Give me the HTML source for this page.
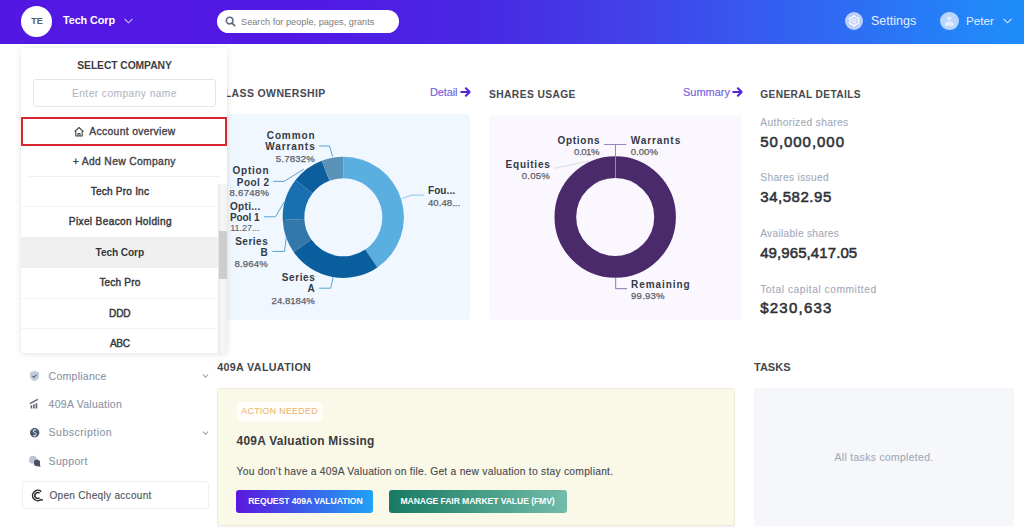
<!DOCTYPE html>
<html><head><meta charset="utf-8"><style>
html,body{margin:0;padding:0;width:1024px;height:528px;overflow:hidden;background:#fff;font-family:"Liberation Sans",sans-serif;position:relative}
.t{position:absolute;line-height:1;white-space:nowrap}
.circ{position:absolute;border-radius:50%}
#hdr{position:absolute;left:0;top:0;width:1024px;height:43.5px;background:linear-gradient(90deg,#5317e2 0%,#5219e4 30%,#4828e4 47%,#4143e8 62.5%,#3263f1 78%,#2287f9 96%,#1f8cfb 100%)}
#dd{position:absolute;left:21.2px;top:47.5px;width:205.5px;height:305.2px;background:#fff;border-radius:3px;box-shadow:0 1px 6px rgba(0,0,0,0.12)}
</style></head><body>
<div id="hdr"></div><div class="circ" style="left:21px;top:6px;width:31px;height:31px;background:#fff"></div><div class="t" style="left:31.20px;top:16.98px;font-size:9.0px;color:#555a60;letter-spacing:0.000px;font-weight:700;">TE</div>
<div class="t" style="left:63.00px;top:15.16px;font-size:10.8px;color:#fff;letter-spacing:-0.076px;font-weight:700;">Tech Corp</div>
<svg style="position:absolute;left:123px;top:17px" width="11" height="8"><path d="M1.5,1.8 L5.5,5.8 L9.5,1.8" fill="none" stroke="#c9c0f5" stroke-width="1.1"/></svg><div style="position:absolute;left:217px;top:10px;width:182px;height:23px;border-radius:12px;background:#fff"></div><svg style="position:absolute;left:225px;top:16px" width="11" height="11"><circle cx="4.6" cy="4.6" r="3.3" fill="none" stroke="#5f6b7e" stroke-width="1.6"/><path d="M7.1,7.1 L9.6,9.6" stroke="#5f6b7e" stroke-width="1.8" stroke-linecap="round"/></svg><div class="t" style="top:18.21px;font-size:9.2px;color:#7d7d7d;left:241px;">Search for people, pages, grants</div>
<div class="circ" style="left:845px;top:11.9px;width:18.3px;height:18.3px;background:rgba(255,255,255,0.68)"></div><svg style="position:absolute;left:0;top:0" width="1024" height="44"><polygon points="854.20,15.60 856.15,17.52 858.79,18.25 858.10,20.90 858.79,23.55 856.15,24.28 854.20,26.20 852.25,24.28 849.61,23.55 850.30,20.90 849.61,18.25 852.25,17.52" fill="none" stroke="rgba(255,255,255,0.85)" stroke-width="1.3" stroke-linejoin="round"/><circle cx="854.2" cy="20.9" r="1.7" fill="none" stroke="rgba(255,255,255,0.85)" stroke-width="1.1"/></svg><div class="t" style="top:14.72px;font-size:12.5px;color:#e6eeff;left:871px;">Settings</div>
<div class="circ" style="left:940.2px;top:12.1px;width:18.4px;height:18.4px;background:rgba(255,255,255,0.68)"></div><svg style="position:absolute;left:0;top:0" width="1024" height="44"><circle cx="949.3" cy="18.3" r="2.1" fill="rgba(255,255,255,0.55)"/><path d="M944.7,25.8 Q944.7,21.6 949.4,21.6 Q954.1,21.6 954.1,25.8 Z" fill="rgba(255,255,255,0.6)"/></svg><div class="t" style="top:15.40px;font-size:11.7px;color:#e6eeff;left:966px;">Peter</div>
<svg style="position:absolute;left:1002px;top:17px" width="11" height="8"><path d="M1.5,1.8 L5.5,5.8 L9.5,1.8" fill="none" stroke="#d6e6ff" stroke-width="1.1"/></svg><div class="t" style="left:216.80px;top:89.32px;font-size:10.49px;color:#46494f;letter-spacing:0.389px;font-weight:700;">CLASS OWNERSHIP</div>
<div class="t" style="left:430.00px;top:86.99px;font-size:11.0px;color:#7a5fe0;letter-spacing:-0.145px;-webkit-text-stroke:0.15px #7a5fe0;">Detail</div>
<svg style="position:absolute;left:460.2px;top:86.5px" width="12" height="11"><path d="M1.3,5 H9.6 M5.9,1.3 L9.6,5 L5.9,8.7" fill="none" stroke="#5224e0" stroke-width="2.1" stroke-linecap="round" stroke-linejoin="round"/></svg><div class="t" style="left:489.00px;top:89.61px;font-size:10.27px;color:#46494f;letter-spacing:0.393px;font-weight:700;">SHARES USAGE</div>
<div class="t" style="left:683.00px;top:86.99px;font-size:11.0px;color:#7a5fe0;letter-spacing:-0.010px;-webkit-text-stroke:0.15px #7a5fe0;">Summary</div>
<svg style="position:absolute;left:731.5px;top:86.5px" width="12" height="11"><path d="M1.3,5 H9.6 M5.9,1.3 L9.6,5 L5.9,8.7" fill="none" stroke="#5224e0" stroke-width="2.1" stroke-linecap="round" stroke-linejoin="round"/></svg><div class="t" style="left:760.30px;top:89.67px;font-size:10.2px;color:#46494f;letter-spacing:0.357px;font-weight:700;">GENERAL DETAILS</div>
<div style="position:absolute;left:217px;top:114px;width:253px;height:206px;border-radius:3px;background:#f0f7fe"></div><div style="position:absolute;left:489px;top:114.5px;width:253px;height:205.5px;border-radius:3px;background:#faf8fe"></div><svg style="position:absolute;left:0;top:0" width="1024" height="528"><path d="M343.30,156.70 A60.6,60.6 0 0 1 377.41,267.39 L365.25,249.53 A39,39 0 0 0 343.30,178.30 Z" fill="#5aaee0"/><path d="M377.41,267.39 A60.6,60.6 0 0 1 293.60,251.97 L311.32,239.62 A39,39 0 0 0 365.25,249.53 Z" fill="#0b5e9e"/><path d="M293.60,251.97 A60.6,60.6 0 0 1 282.76,220.08 L304.34,219.09 A39,39 0 0 0 311.32,239.62 Z" fill="#3278aa"/><path d="M282.76,220.08 A60.6,60.6 0 0 1 295.51,180.04 L312.55,193.32 A39,39 0 0 0 304.34,219.09 Z" fill="#1a6fae"/><path d="M295.51,180.04 A60.6,60.6 0 0 1 321.76,160.66 L329.44,180.85 A39,39 0 0 0 312.55,193.32 Z" fill="#0d5e9c"/><path d="M321.76,160.66 A60.6,60.6 0 0 1 343.30,156.70 L343.30,178.30 A39,39 0 0 0 329.44,180.85 Z" fill="#5b93b8"/><polyline points="319,146 329.5,146 332.6,156.4" fill="none" stroke="#5aa3cf" stroke-width="1"/><polyline points="273.2,181.4 284,181.4 303.8,169.2" fill="none" stroke="#5aa3cf" stroke-width="1"/><polyline points="264,216.8 275.5,216.8 284.5,201.4" fill="none" stroke="#5aa3cf" stroke-width="1"/><polyline points="272.3,251.4 284.5,251.4 286.4,236.6" fill="none" stroke="#5aa3cf" stroke-width="1"/><polyline points="319.3,288.2 330.7,288.2 333,277.5" fill="none" stroke="#5aa3cf" stroke-width="1"/><polyline points="402.3,198.4 411.8,195.1 423.6,195.1" fill="none" stroke="#8cc4e6" stroke-width="1"/><circle cx="615.2" cy="217" r="49.85" fill="none" stroke="#4a2a6b" stroke-width="21.7"/><path d="M615.5,144.5 V177.7 M604,144.5 H626.3" stroke="#9a86bd" stroke-width="1" fill="none"/><polyline points="553.6,168.4 588.75,161.1" fill="none" stroke="#dcd8e6" stroke-width="1"/><polyline points="615.7,277.8 615.7,288.7 627,288.7" fill="none" stroke="#8a76ad" stroke-width="1"/></svg><div class="t" style="left:266.80px;top:130.84px;font-size:10.0px;color:#343a46;letter-spacing:0.874px;font-weight:700;">Common</div>
<div class="t" style="left:265.20px;top:142.03px;font-size:10.0px;color:#343a46;letter-spacing:0.933px;font-weight:700;">Warrants</div>
<div class="t" style="left:275.80px;top:153.87px;font-size:9.6px;color:#5d6068;letter-spacing:0.167px;-webkit-text-stroke:0.25px #5d6068;">5.7832%</div>
<div class="t" style="left:232.60px;top:166.13px;font-size:10.0px;color:#343a46;letter-spacing:0.738px;font-weight:700;">Option</div>
<div class="t" style="left:236.80px;top:177.53px;font-size:10.0px;color:#343a46;letter-spacing:0.438px;font-weight:700;">Pool 2</div>
<div class="t" style="left:229.50px;top:188.47px;font-size:9.6px;color:#5d6068;letter-spacing:0.267px;-webkit-text-stroke:0.25px #5d6068;">8.6748%</div>
<div class="t" style="left:230.00px;top:201.63px;font-size:10.0px;color:#343a46;letter-spacing:0.312px;font-weight:700;">Opti...</div>
<div class="t" style="left:230.00px;top:212.53px;font-size:10.0px;color:#343a46;letter-spacing:-0.102px;font-weight:700;">Pool 1</div>
<div class="t" style="left:230.14px;top:224.08px;font-size:9.0px;color:#5d6068;letter-spacing:0.000px;-webkit-text-stroke:0.12px #5d6068;">11.27...</div>
<div class="t" style="left:235.20px;top:236.84px;font-size:10.0px;color:#343a46;letter-spacing:0.496px;font-weight:700;">Series</div>
<div class="t" style="left:260.48px;top:247.84px;font-size:10.0px;color:#343a46;letter-spacing:0.000px;font-weight:700;">B</div>
<div class="t" style="left:234.50px;top:259.27px;font-size:9.6px;color:#5d6068;letter-spacing:0.127px;-webkit-text-stroke:0.25px #5d6068;">8.964%</div>
<div class="t" style="left:281.80px;top:273.34px;font-size:10.0px;color:#343a46;letter-spacing:0.596px;font-weight:700;">Series</div>
<div class="t" style="left:307.58px;top:284.14px;font-size:10.0px;color:#343a46;letter-spacing:0.000px;font-weight:700;">A</div>
<div class="t" style="left:271.60px;top:295.67px;font-size:9.6px;color:#5d6068;letter-spacing:-0.005px;-webkit-text-stroke:0.25px #5d6068;">24.8184%</div>
<div class="t" style="left:428.00px;top:186.03px;font-size:10.0px;color:#343a46;letter-spacing:0.068px;font-weight:700;">Fou...</div>
<div class="t" style="left:428.00px;top:197.67px;font-size:9.6px;color:#5d6068;letter-spacing:0.025px;-webkit-text-stroke:0.25px #5d6068;">40.48...</div>
<div class="t" style="left:557.50px;top:135.94px;font-size:10.0px;color:#343a46;letter-spacing:0.705px;font-weight:700;">Options</div>
<div class="t" style="left:574.00px;top:147.37px;font-size:9.6px;color:#5d6068;letter-spacing:-0.429px;-webkit-text-stroke:0.25px #5d6068;">0.01%</div>
<div class="t" style="left:630.70px;top:135.94px;font-size:10.0px;color:#343a46;letter-spacing:0.933px;font-weight:700;">Warrants</div>
<div class="t" style="left:630.70px;top:147.37px;font-size:9.6px;color:#5d6068;letter-spacing:0.021px;-webkit-text-stroke:0.25px #5d6068;">0.00%</div>
<div class="t" style="left:505.60px;top:159.53px;font-size:10.0px;color:#343a46;letter-spacing:0.757px;font-weight:700;">Equities</div>
<div class="t" style="left:521.80px;top:170.97px;font-size:9.6px;color:#5d6068;letter-spacing:0.196px;-webkit-text-stroke:0.25px #5d6068;">0.05%</div>
<div class="t" style="left:631.10px;top:280.44px;font-size:10.0px;color:#343a46;letter-spacing:0.935px;font-weight:700;">Remaining</div>
<div class="t" style="left:631.10px;top:291.37px;font-size:9.6px;color:#5d6068;letter-spacing:0.187px;-webkit-text-stroke:0.25px #5d6068;">99.93%</div>
<div class="t" style="left:760.30px;top:117.67px;font-size:10.2px;color:#a2a9b8;letter-spacing:0.362px;-webkit-text-stroke:0.1px #a2a9b8;">Authorized shares</div>
<div class="t" style="left:760.30px;top:133.50px;font-size:15.0px;color:#2f3237;letter-spacing:0.958px;-webkit-text-stroke:0.55px #2f3237;">50,000,000</div>
<div class="t" style="left:760.30px;top:172.77px;font-size:10.2px;color:#a2a9b8;letter-spacing:0.314px;-webkit-text-stroke:0.1px #a2a9b8;">Shares issued</div>
<div class="t" style="left:760.30px;top:188.90px;font-size:15.0px;color:#2f3237;letter-spacing:0.533px;-webkit-text-stroke:0.55px #2f3237;">34,582.95</div>
<div class="t" style="left:760.20px;top:228.87px;font-size:10.2px;color:#a2a9b8;letter-spacing:0.276px;-webkit-text-stroke:0.1px #a2a9b8;">Available shares</div>
<div class="t" style="left:760.20px;top:245.00px;font-size:15.0px;color:#2f3237;letter-spacing:0.090px;-webkit-text-stroke:0.55px #2f3237;">49,965,417.05</div>
<div class="t" style="left:760.20px;top:285.17px;font-size:10.2px;color:#a2a9b8;letter-spacing:0.557px;-webkit-text-stroke:0.1px #a2a9b8;">Total capital committed</div>
<div class="t" style="left:760.20px;top:300.00px;font-size:15.0px;color:#2f3237;letter-spacing:1.234px;-webkit-text-stroke:0.55px #2f3237;">$230,633</div>
<div class="t" style="left:48.60px;top:370.81px;font-size:10.5px;color:#8a93a6;letter-spacing:0.262px;-webkit-text-stroke:0.1px #8a93a6;">Compliance</div>
<div class="t" style="left:48.60px;top:399.31px;font-size:10.5px;color:#8a93a6;letter-spacing:0.256px;-webkit-text-stroke:0.1px #8a93a6;">409A Valuation</div>
<div class="t" style="left:48.60px;top:427.41px;font-size:10.5px;color:#8a93a6;letter-spacing:0.474px;-webkit-text-stroke:0.1px #8a93a6;">Subscription</div>
<div class="t" style="left:48.60px;top:456.11px;font-size:10.5px;color:#8a93a6;letter-spacing:0.322px;-webkit-text-stroke:0.1px #8a93a6;">Support</div>
<svg style="position:absolute;left:200px;top:371px" width="10" height="10"><path d="M2.9,3.6 L5.5,6.1 L8.1,3.6" fill="none" stroke="#a4abb8" stroke-width="1.25"/></svg><svg style="position:absolute;left:200px;top:428px" width="10" height="10"><path d="M2.9,3.6 L5.5,6.1 L8.1,3.6" fill="none" stroke="#a4abb8" stroke-width="1.25"/></svg><svg style="position:absolute;left:29px;top:370px" width="11" height="12"><path d="M5.5,0.8 L10,2.5 V6 Q10,9.5 5.5,11.3 Q1,9.5 1,6 V2.5 Z" fill="#c3cadb"/><path d="M3.4,6 L5,7.5 L7.6,4.7" fill="none" stroke="#66708c" stroke-width="1.15"/></svg><svg style="position:absolute;left:0;top:390px" width="50" height="25"><path d="M30.6,18.6 V15.2 H32.2 V18.6 Z M33.1,18.6 V14.2 H34.7 V18.6 Z M35.6,18.6 V13.2 H37.3 V18.6 Z" fill="#5f6677"/><path d="M30.4,13.3 L37.4,9.6" stroke="#5f6677" stroke-width="1.4" stroke-linecap="round"/></svg><svg style="position:absolute;left:0;top:420px" width="60" height="60"><circle cx="34.7" cy="12.8" r="4.7" fill="#4b5672"/><path d="M36.2,10.6 Q35.6,9.9 34.7,9.9 Q33.2,9.9 33.2,11.1 Q33.2,12.1 34.7,12.6 Q36.3,13.1 36.3,14.3 Q36.3,15.6 34.7,15.6 Q33.7,15.6 33.1,14.9 M34.7,9 V9.9 M34.7,15.6 V16.5" fill="none" stroke="#fff" stroke-width="0.9"/><circle cx="32.9" cy="39.7" r="3.9" fill="#bcc4d3"/><path d="M37.2,39.6 A3.3,3.3 0 1 0 37.2,46.2 L40.4,46.8 L39.9,43.6 A3.3,3.3 0 0 0 37.2,39.6 Z" fill="#46506a"/></svg><div style="position:absolute;left:21.5px;top:480.5px;width:187px;height:28px;border:1px solid #f0f0f0;border-radius:3px;box-sizing:border-box;background:#fff"></div><svg style="position:absolute;left:31px;top:489px" width="13" height="13"><path d="M10.2,2.6 A5.2,5.2 0 1 0 10.2,10.4" fill="none" stroke="#2e2e2e" stroke-width="1.5"/><path d="M8.6,4.3 A2.9,2.9 0 1 0 8.6,8.7" fill="none" stroke="#2e2e2e" stroke-width="1.5"/><circle cx="11" cy="11" r="0.9" fill="#2e2e2e"/></svg><div class="t" style="left:49.40px;top:490.77px;font-size:10.08px;color:#505357;letter-spacing:0.281px;-webkit-text-stroke:0.12px #505357;">Open Cheqly account</div>
<div class="t" style="left:217.20px;top:362.05px;font-size:10.69px;color:#44474c;letter-spacing:0.362px;font-weight:700;">409A VALUATION</div>
<div style="position:absolute;left:217px;top:388.3px;width:518px;height:137.3px;border:1px solid #ecebdc;border-radius:3px;box-sizing:border-box;background:#faf8e7;box-shadow:0 1px 2px rgba(0,0,0,0.06)"></div><div style="position:absolute;left:236.5px;top:401.5px;width:85.5px;height:19.5px;border-radius:3px;background:#fffefa"></div><div class="t" style="left:241.30px;top:406.94px;font-size:8.81px;color:#e9b877;letter-spacing:0.321px;-webkit-text-stroke:0.1px #e9b877;">ACTION NEEDED</div>
<div class="t" style="left:236.50px;top:436.13px;font-size:11.9px;color:#383b42;letter-spacing:0.294px;font-weight:700;">409A Valuation Missing</div>
<div class="t" style="left:236.50px;top:466.57px;font-size:10.31px;color:#45484d;letter-spacing:0.241px;-webkit-text-stroke:0.1px #45484d;">You don’t have a 409A Valuation on file. Get a new valuation to stay compliant.</div>
<div style="position:absolute;left:236.2px;top:490.1px;width:137.3px;height:22.5px;border-radius:3px;background:linear-gradient(90deg,#5a17de,#1fa3f5)"></div><div class="t" style="left:248.20px;top:497.02px;font-size:8.6px;color:#fff;letter-spacing:-0.047px;font-weight:700;">REQUEST 409A VALUATION</div>
<div style="position:absolute;left:389px;top:490.2px;width:178px;height:22.6px;border-radius:3px;background:linear-gradient(90deg,#177a62,#72bcaa)"></div><div class="t" style="left:400.50px;top:497.02px;font-size:8.6px;color:#fff;letter-spacing:-0.077px;font-weight:700;">MANAGE FAIR MARKET VALUE (FMV)</div>
<div class="t" style="top:362.09px;font-size:11px;color:#44474c;font-weight:700;left:754px;">TASKS</div>
<div style="position:absolute;left:754px;top:388.3px;width:259.8px;height:137.3px;border-radius:2px;background:#f5f7fb"></div><div class="t" style="left:834.50px;top:452.56px;font-size:10.32px;color:#a3a8b5;letter-spacing:0.364px;-webkit-text-stroke:0.1px #a3a8b5;">All tasks completed.</div>
<div id="dd"></div><div class="t" style="left:77.30px;top:61.08px;font-size:10.3px;color:#3c3e43;letter-spacing:-0.068px;font-weight:700;">SELECT COMPANY</div>
<div style="position:absolute;left:33.3px;top:79.3px;width:182.6px;height:27.7px;border:1px solid #e3e5ea;border-radius:3px;box-sizing:border-box;background:#fff"></div><div class="t" style="left:72.00px;top:88.95px;font-size:10.22px;color:#b3b8c4;letter-spacing:0.433px;-webkit-text-stroke:0.1px #b3b8c4;">Enter company name</div>
<div style="position:absolute;left:21.2px;top:117.4px;width:205.5px;height:28.3px;border:2px solid #d8262f;box-sizing:border-box"></div><svg style="position:absolute;left:73px;top:125.5px" width="12" height="11"><path d="M1.6,5.6 L6,1.5 L10.4,5.6 M2.8,4.6 V10 H9.2 V4.6 M5,10 V7.5 H7 V10" fill="none" stroke="#444" stroke-width="1.1" stroke-linejoin="round"/></svg><div class="t" style="left:89.30px;top:126.78px;font-size:10.3px;color:#3f4146;letter-spacing:0.350px;-webkit-text-stroke:0.35px #3f4146;">Account overview</div>
<div class="t" style="left:72.80px;top:156.88px;font-size:10.3px;color:#3f4146;letter-spacing:0.347px;-webkit-text-stroke:0.35px #3f4146;">+ Add New Company</div>
<div style="position:absolute;left:28.5px;top:175.5px;width:191px;height:1px;background:#f0f0f0"></div><div style="position:absolute;left:21.4px;top:236.5px;width:197px;height:31px;background:#f0f0f0"></div><div style="position:absolute;left:21.4px;top:206px;width:197px;height:1px;background:#f3f3f3"></div><div style="position:absolute;left:21.4px;top:298px;width:197px;height:1px;background:#f3f3f3"></div><div style="position:absolute;left:21.4px;top:328px;width:197px;height:1px;background:#f3f3f3"></div><div class="t" style="left:90.80px;top:186.85px;font-size:10.1px;color:#36383c;letter-spacing:0.188px;-webkit-text-stroke:0.42px #36383c;">Tech Pro Inc</div>
<div class="t" style="left:68.80px;top:217.45px;font-size:10.1px;color:#36383c;letter-spacing:0.357px;-webkit-text-stroke:0.42px #36383c;">Pixel Beacon Holding</div>
<div class="t" style="left:95.60px;top:247.57px;font-size:10.2px;color:#36383c;letter-spacing:-0.136px;font-weight:700;">Tech Corp</div>
<div class="t" style="left:99.40px;top:278.45px;font-size:10.1px;color:#36383c;letter-spacing:0.149px;-webkit-text-stroke:0.42px #36383c;">Tech Pro</div>
<div class="t" style="left:109.00px;top:309.05px;font-size:10.1px;color:#36383c;letter-spacing:-0.143px;-webkit-text-stroke:0.42px #36383c;">DDD</div>
<div class="t" style="left:110.00px;top:339.25px;font-size:10.1px;color:#36383c;letter-spacing:-0.383px;-webkit-text-stroke:0.42px #36383c;">ABC</div>
<div style="position:absolute;left:218px;top:184px;width:8.7px;height:168.7px;background:linear-gradient(90deg,#ededed,#f6f6f6 30%,#f1f1f1);border-left:1px solid #e6e6e6;box-sizing:border-box"></div><div style="position:absolute;left:219px;top:230.6px;width:7.7px;height:48.7px;background:#cdcdcd"></div>
</body></html>
